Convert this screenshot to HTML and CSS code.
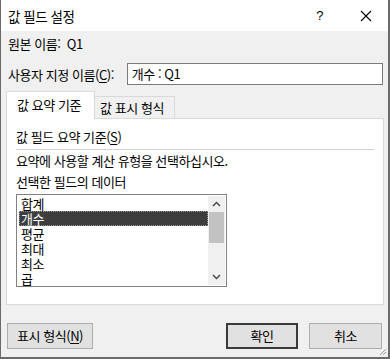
FILE: index.html
```html
<!DOCTYPE html>
<html lang="ko">
<head>
<meta charset="utf-8">
<link rel="stylesheet" href="styles.css">
</head>
<body>
<div class="dialog">
  <div class="titlebar">
    <span class="title">값 필드 설정</span>
    <span class="help">?</span>
    <svg class="close" width="12" height="12" viewBox="0 0 12 12"><path d="M1 1 L11 11 M11 1 L1 11" stroke="#000" stroke-width="1.1" fill="none"/></svg>
  </div>
  <div class="body">
    <div class="source">원본 이름:&nbsp;&nbsp;Q1</div>
    <div class="custom">
      <span class="custom-label">사용자 지정 이름(<u>C</u>):</span>
      <div class="input">개수 : Q1</div>
    </div>
    <div class="tabs">
      <div class="tab active">값 요약 기준</div>
      <div class="tab">값 표시 형식</div>
    </div>
    <div class="panel">
      <div class="group-title">값 필드 요약 기준(<u>S</u>)</div>
      <div class="sep"></div>
      <div class="line">요약에 사용할 계산 유형을 선택하십시오.</div>
      <div class="line">선택한 필드의 데이터</div>
      <div class="listbox">
        <div class="items">
          <div class="item">합계</div>
          <div class="item selected">개수</div>
          <div class="item">평균</div>
          <div class="item">최대</div>
          <div class="item">최소</div>
          <div class="item">곱</div>
        </div>
        <div class="scrollbar">
          <svg class="arrow" width="9" height="6" viewBox="0 0 9 6"><path d="M1 5 L4.5 1.5 L8 5" stroke="#444" stroke-width="1.4" fill="none"/></svg>
          <div class="track"><div class="thumb"></div></div>
          <svg class="arrow" width="9" height="6" viewBox="0 0 9 6"><path d="M1 1 L4.5 4.5 L8 1" stroke="#444" stroke-width="1.4" fill="none"/></svg>
        </div>
      </div>
    </div>
    <div class="buttons">
      <div class="btn fmt">표시 형식(<u>N</u>)</div>
      <div class="spacer"></div>
      <div class="btn ok">확인</div>
      <div class="btn cancel">취소</div>
    </div>
  </div>
  <svg class="grip" width="8" height="8" viewBox="0 0 8 8"><path d="M7 1 L1 7 M7 4 L4 7" stroke="#999" stroke-width="1" fill="none"/></svg>
</div>
</body>
</html>
```
FILE: styles.css
```css
* { box-sizing: border-box; }
html, body { margin: 0; padding: 0; }
body {
  width: 390px;
  height: 359px;
  overflow: hidden;
  font-family: "Noto Sans CJK KR", "Noto Sans", sans-serif;
  font-size: 13px;
  letter-spacing: -0.45px;
  color: #000;
  background: #f0f0f0;
}
u { text-decoration: underline; text-underline-offset: 2px; }
.dialog {
  position: relative;
  width: 390px;
  height: 359px;
  border-left: 1px solid #6a6a6a;
  border-right: 2px solid #6a6a6a;
  border-bottom: 2px solid #6a6a6a;
  background: #f0f0f0;
}
.titlebar {
  height: 31px;
  background: #fff;
  display: flex;
  align-items: center;
  padding-left: 7px;
}
.title { font-size: 13.5px; flex: 1; padding-top: 1px; }
.help { font-size: 13px; margin-right: 37px; font-family: "Liberation Sans", sans-serif; }
.close { margin-right: 16px; }
.body { padding: 0 5px 0 5px; }
.source {
  height: 26px;
  line-height: 26px;
  padding-left: 2px;
}
.custom {
  margin-top: 6px;
  height: 22px;
  display: flex;
  align-items: center;
  padding-left: 2px;
}
.custom-label { width: 119px; white-space: nowrap; }
.input {
  width: 257px;
  height: 22px;
  line-height: 20px;
  border: 1px solid #7a7a7a;
  background: #fff;
  padding-left: 4px;
}
.tabs {
  margin-top: 6px;
  display: flex;
  align-items: flex-end;
  height: 27px;
  position: relative;
  z-index: 1;
}
.tab {
  height: 22px;
  line-height: 21px;
  width: 81px;
  padding: 0 0 0 5px;
  border: 1px solid #d9d9d9;
  border-bottom: none;
  background: #f0f0f0;
  margin-left: -1px;
  white-space: nowrap;
}
.tab.active {
  height: 28px;
  line-height: 26px;
  width: 89px;
  margin-left: 0;
  margin-bottom: -1px;
  background: #fff;
  padding: 0 0 0 10px;
}
.panel {
  width: 378px;
  height: 187px;
  background: #fff;
  border: 1px solid #d9d9d9;
  padding: 8px 9px 0 9px;
}
.group-title { height: 20px; line-height: 20px; }
.sep {
  margin-top: 2px;
  height: 1px;
  background: #d0d0d0;
  width: 358px;
}
.line { height: 20px; line-height: 20px; margin-top: 1px; white-space: nowrap; }
.listbox {
  margin-top: 2px;
  width: 211px;
  height: 93px;
  border: 1px solid #828282;
  display: flex;
  padding: 1px;
}
.items { flex: 1; padding-left: 1px; }
.item { height: 15px; line-height: 15px; padding-left: 2px; }
.item.selected {
  background: #3d3d3d;
  color: #fff;
  outline: 1px dotted #9a9a9a;
  outline-offset: -1px;
}
.scrollbar {
  width: 17px;
  background: #f0f0f0;
  display: flex;
  flex-direction: column;
  align-items: center;
}
.arrow { margin: 5px 0 6px; flex: none; }
.track { flex: 1; width: 100%; padding: 0 1px; }
.thumb { width: 15px; height: 31px; background: #c2c2c2; margin-top: -1px; }
.scrollbar .arrow:last-child { margin: 5px 0 5px; }
.buttons {
  margin-top: 18px;
  display: flex;
  height: 26px;
  padding-left: 1px;
}
.spacer { flex: 1; }
.btn {
  height: 26px;
  line-height: 24px;
  text-align: center;
  background: #e1e1e1;
  border: 1px solid #adadad;
  white-space: nowrap;
}
.btn.fmt { width: 86px; }
.btn.ok { width: 72px; border: 2px solid #3a3a3a; line-height: 22px; margin-right: 11px; }
.btn.cancel { width: 73px; margin-right: 1px; }
.grip { position: absolute; right: 1px; bottom: 1px; }
```
